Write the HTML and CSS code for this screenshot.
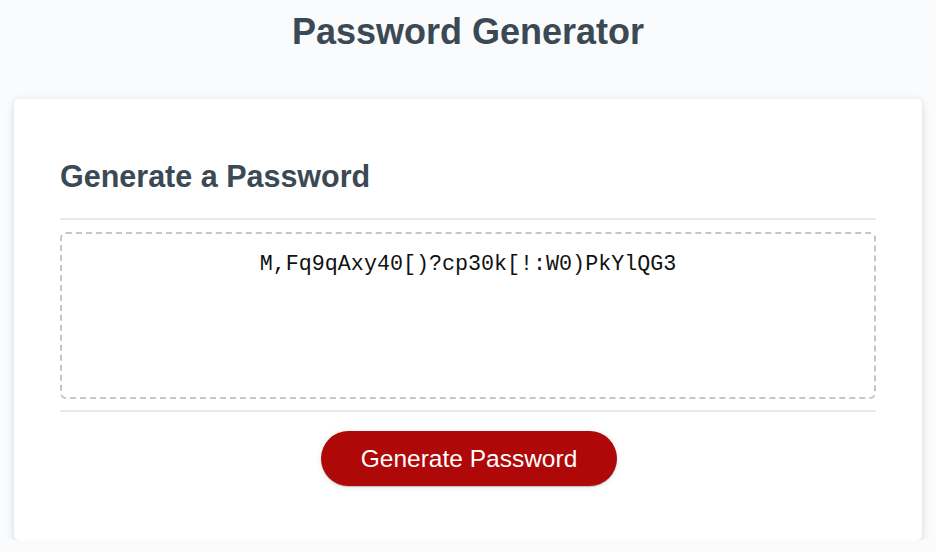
FILE: index.html
```html
<!DOCTYPE html>
<html lang="en">
<head>
<meta charset="utf-8">
<title>Password Generator</title>
<link rel="stylesheet" href="styles.css">
</head>
<body>
<div class="wrapper">
  <header class="page-header">
    <h1 class="title">Password Generator</h1>
  </header>
  <div class="card">
    <div class="card-header">
      <h2 class="card-title">Generate a Password</h2>
    </div>
    <div class="card-body">
      <textarea readonly class="password" aria-label="Generated Password">M,Fq9qAxy40[)?cp30k[!:W0)PkYlQG3</textarea>
    </div>
    <div class="card-footer">
      <button class="btn">Generate Password</button>
    </div>
  </div>
</div>
</body>
</html>
```

FILE: styles.css
```css
*, *::before, *::after { box-sizing: border-box; }
html, body { margin: 0; padding: 0; }
body {
  font-family: "Liberation Sans", Arial, sans-serif;
  background-color: #f9fbfd;
  color: #3b4954;
}
.wrapper {
  padding: 11px 14px 0 14px;
}
.page-header {
  text-align: center;
  margin-bottom: 46px;
}
.title {
  margin: 0;
  font-size: 36px;
  line-height: 42px;
  font-weight: bold;
  color: #3b4954;
}
.card {
  background: #fff;
  border-radius: 5px;
  box-shadow: rgba(0, 0, 0, 0.15) 0 2px 8px 0;
  padding: 34px 46px 34px 46px;
  height: 441px;
}
.card-header::after {
  content: "";
  display: block;
  height: 2px;
  background: #e7e9eb;
}
.card-title {
  margin: 25px 0 24px 0;
  font-size: 30.5px;
  line-height: 36px;
  font-weight: bold;
}
.card-body {
  padding: 12px 0 11px 0;
}
.password {
  display: block;
  width: 100%;
  height: 167px;
  margin: 0;
  padding: 18px 17px 0 17px;
  border: 2px dashed #c0c7cf;
  border-radius: 6px;
  font-family: "Liberation Mono", "Courier New", monospace;
  font-size: 21.7px;
  line-height: 25px;
  color: #111;
  text-align: center;
  resize: none;
  overflow: hidden;
  background: #fff;
  outline: none;
}
.card-footer {
  text-align: center;
}
.card-footer::before {
  content: "";
  display: block;
  height: 2px;
  background: #e7e9eb;
}
.btn {
  display: inline-block;
  margin: 19px 0 0 2px;
  border: none;
  border-radius: 28px;
  background-color: #af0808;
  color: #fff;
  font-family: "Liberation Sans", Arial, sans-serif;
  font-size: 24.5px;
  line-height: 25px;
  padding: 15px 40px;
  box-shadow: rgba(0, 0, 0, 0.1) 0 1px 6px 0, rgba(0, 0, 0, 0.2) 0 1px 1px 0;
  cursor: pointer;
}
```
